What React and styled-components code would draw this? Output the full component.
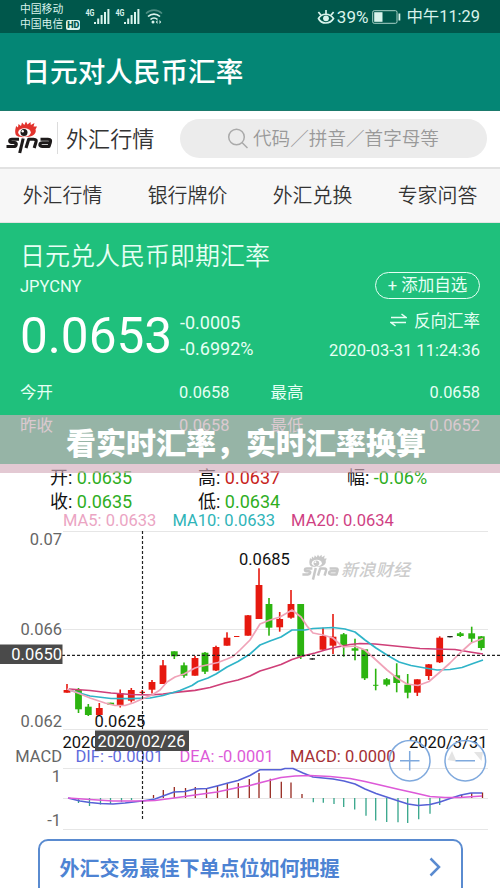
import React from "react";
import styled, { createGlobalStyle } from "styled-components";

const GlobalStyle = createGlobalStyle`
  * {
    box-sizing: border-box;
  }
  body {
    margin: 0;
    background-color: white;
    font-family: Roboto, "Noto Sans CJK SC", sans-serif;
  }
`;

const Page = styled.div`
  position: relative;
  width: 500px;
  height: 888px;
  overflow: hidden;
  background-color: white;
`;

const StatusBar = styled.div`
  height: 33px;
  padding: 1px 20px 0;
  display: flex;
  align-items: center;
  justify-content: space-between;
  background-color: #00574b;
  color: #d9f3ec;
`;

const StatusGroup = styled.div`
  display: flex;
  align-items: center;
`;

const Carriers = styled.div`
  width: 65px;
  font-size: 10.8px;
  line-height: 15.5px;
  white-space: nowrap;
`;

const Carrier = styled.div`
  display: flex;
  align-items: center;
`;

const HdBadge = styled.span`
  margin-left: 3px;
  padding: 0 1px;
  border-radius: 2px;
  background-color: #d9f3ec;
  color: #00574b;
  font-size: 9px;
  font-weight: 900;
  line-height: 10px;
`;

const BatteryLevel = styled.span`
  margin-left: 2px;
  font-size: 17px;
  line-height: 20px;
`;

const Clock = styled.span`
  margin-left: 5px;
  font-size: 16.4px;
  line-height: 20px;
  white-space: nowrap;
`;

const TitleBar = styled.div`
  height: 78px;
  padding: 2px 0 0 22.5px;
  display: flex;
  align-items: center;
  background-color: #048675;
  border-bottom: 1px solid #1b7a6c;
`;

const PageTitle = styled.h1`
  margin: 0;
  color: white;
  font-size: 27.6px;
  font-weight: 500;
  line-height: 40px;
`;

const SearchRow = styled.div`
  height: 56px;
  padding: 0 13px 2px 6px;
  display: flex;
  align-items: center;
`;

const Brand = styled.div`
  width: 174px;
  display: flex;
  align-items: center;
`;

const BrandName = styled.span`
  height: 32px;
  margin-left: 4px;
  padding-left: 8px;
  border-left: 1px solid #dcdcdc;
  color: #333;
  font-size: 22.1px;
  font-weight: 350;
  line-height: 34px;
`;

const SearchBox = styled.div`
  flex: 1;
  height: 39px;
  padding: 0 0 3px 47px;
  display: flex;
  align-items: center;
  gap: 4px;
  border-radius: 20px;
  background-color: #ececec;
  color: #999;
  font-size: 18.6px;
  font-weight: 350;
  white-space: nowrap;
`;

const SearchIcon = styled.svg`
  margin-top: 3px;
`;

const Nav = styled.div`
  height: 56px;
  display: flex;
  border-top: 2px solid #e2e2e2;
  border-bottom: 1px solid #e4e4e4;
  background-color: #f7f7f7;
`;

const NavItem = styled.div`
  flex: 1;
  text-align: center;
  color: #333;
  font-size: 19.9px;
  font-weight: 350;
  line-height: 56px;
`;

const QuotePanel = styled.div`
  height: 241px;
  padding: 14px 20px 0;
  background-color: #1fc07c;
  color: #e6fff4;
`;

const QuoteTop = styled.div`
  height: 139px;
  display: flex;
  justify-content: space-between;
`;

const PairName = styled.div`
  height: 37px;
  font-size: 25px;
  font-weight: 350;
  line-height: 39px;
  white-space: nowrap;
`;

const PairCode = styled.div`
  height: 24px;
  font-size: 16.5px;
  line-height: 25px;
`;

const PriceLine = styled.div`
  display: flex;
  align-items: center;
  height: 75px;
`;

const Price = styled.div`
  width: 160px;
  color: white;
  font-size: 49.5px;
  line-height: 60px;
`;

const Change = styled.div`
  font-size: 18px;
  line-height: 26px;
`;

const QuoteSide = styled.div`
  padding-top: 35px;
  display: flex;
  flex-direction: column;
  align-items: flex-end;
  font-size: 16.5px;
`;

const AddButton = styled.button`
  width: 105px;
  height: 27px;
  padding: 0;
  border: 1px solid #e6fff4;
  border-radius: 14px;
  background: none;
  color: inherit;
  font-family: inherit;
  font-size: 16.5px;
  line-height: 24px;
`;

const Reverse = styled.div`
  height: 41px;
  display: flex;
  align-items: center;
  gap: 7px;
`;

const Stamp = styled.div`
  line-height: 22px;
`;

const StatRow = styled.div`
  height: 33px;
  display: flex;
  gap: 41px;
`;

const Stat = styled.div`
  width: 209.5px;
  display: flex;
  justify-content: space-between;
  font-size: 16.4px;
  line-height: 33px;
`;

const InfoGrid = styled.div`
  height: 50px;
  padding: 1px 0 0 50px;
  display: grid;
  grid-template-columns: 148px 149px 1fr;
  grid-auto-rows: 24px;
  color: #111;
  font-size: 18px;
  line-height: 26px;
`;

const InfoValue = styled.span`
  color: ${(props) => props.$color};
`;

const MaRow = styled.div`
  height: 14px;
  padding-left: 63px;
  display: flex;
  gap: 16px;
  font-size: 16.5px;
  line-height: 14px;
  white-space: nowrap;
`;

const MaItem = styled.span`
  color: ${(props) => props.$color};
`;

const Chart = styled.svg`
  display: block;
  font-family: Roboto, "Noto Sans CJK SC", sans-serif;
`;

const PromoLink = styled.div`
  width: 425px;
  height: 60px;
  margin: 8px 0 0 37.5px;
  padding: 0 19px 4px 20px;
  display: flex;
  align-items: center;
  justify-content: space-between;
  border: 2px solid #5a8bd0;
  border-radius: 10px;
  color: #4d83d3;
  font-size: 20px;
  font-weight: 700;
`;

const Banner = styled.div`
  position: absolute;
  top: 415px;
  left: 0;
  width: 500px;
  height: 58px;
  background-color: rgba(213, 173, 188, 0.66);
  color: white;
  font-size: 30px;
  font-weight: 900;
  line-height: 58px;
  text-align: center;
  text-indent: -8px;
  white-space: nowrap;
`;

const RED = "#e6190f";
const GREEN = "#2cb410";
const BLACK = "#222";

// [x, body top, body bottom, wick top, wick bottom, color]
const candles = [
  [67, 690, 692.7, 684, 692.7, RED],
  [78.5, 690, 709.3, 688, 713, GREEN],
  [88.3, 706.7, 715, 704, 716, GREEN],
  [99.3, 708, 715, 703, 716, RED],
  [110.7, 702.7, 704.7, 702.7, 705, GREEN],
  [120.2, 693.3, 705.7, 689.5, 707.5, RED],
  [131.3, 690, 700.7, 688, 702.5, RED],
  [142.3, 691.8, 693, 690, 694, RED],
  [152, 682, 689.7, 680, 693.5, RED],
  [163, 665.3, 684, 660, 684, RED],
  [174.3, 651.3, 656.3, 651.3, 659, GREEN],
  [184, 665.3, 675.7, 662.5, 677.7, GREEN],
  [195, 658, 675.7, 656, 675.7, RED],
  [205, 652.7, 671.7, 652, 674, GREEN],
  [216, 647, 670.5, 645.7, 671, RED],
  [227, 637.7, 645.7, 632.3, 645.7, RED],
  [236.7, 636, 637, 636, 637, RED],
  [248, 615.3, 635.7, 615, 635.7, RED],
  [259, 585, 619, 568.3, 619, RED],
  [269, 604, 627.7, 598, 635.7, GREEN],
  [279.7, 619, 627.3, 612, 631.7, RED],
  [291, 604, 617.7, 590, 618.7, RED],
  [300.7, 604, 656.7, 604, 659, GREEN],
  [312.3, 658.3, 659.6, 658.3, 659.6, BLACK],
  [323, 636, 649.7, 627.7, 649.7, RED],
  [333, 636.7, 645.7, 614, 654, RED],
  [343.7, 634.3, 645, 633, 656.7, GREEN],
  [355, 648.3, 650.7, 638.7, 660.3, GREEN],
  [364.7, 649.3, 678.3, 649.3, 680, GREEN],
  [375.7, 684.8, 685.8, 668.7, 690.3, GREEN],
  [386.7, 679.3, 684.7, 678, 686.3, GREEN],
  [396.7, 675.3, 683, 663.3, 692.3, GREEN],
  [407.7, 684.7, 692.7, 674, 698.3, GREEN],
  [417.3, 679.3, 692.7, 679.3, 696, RED],
  [428.7, 664.3, 676, 664, 680, RED],
  [439.7, 637.7, 662.3, 636.3, 663, RED],
  [450, 636, 637.3, 636, 637.3, BLACK],
  [460.3, 633.3, 636, 632, 637, GREEN],
  [471.7, 633.3, 638.7, 626.7, 642, GREEN],
  [481.3, 636.3, 648, 636, 650.3, GREEN],
];

const ma5 =
  "67,689 78,693 90,698 105,703 115,705.5 125,705.5 133,703 142,699 152,695 160,690 167,682 175,677 184,674 195,668 200,666.5 218,662.5 227,659 233,656.5 240,650 250,640 260,624 270,620 280,617 292,610 301,617 307,626 313,633 323,635 333,638 343,647 355,646 365,650 376,660 387,670 397,678 407,684 418,685.5 429,681.5 440,672 450,663 460,653 471,643 483,638.5";

const ma10 =
  "69,690 90,696 111,698.5 131,698.7 150,698 163,695.5 180,690.5 192,685.5 198,681.5 208,678 216,674 227,667 238,661.5 250,654 260,645 270,641 281,637 292,630 305,630 313,628.5 333,627.5 345,629 355,632 365,640 376,648 387,655 399,662 411,665.5 425,668 437,670 450,669.5 462,667.5 473,663.5 483,660";

const ma20 =
  "69,689 90,690.5 111,693 131,694.5 150,695 163,694 180,691.8 195,690.3 210,687.5 225,683 238,680 250,676 260,671 270,668 281,664.5 292,659.5 303,656 315,653 325,650 337,647 350,644.5 360,643.5 375,644 390,645.5 405,647 420,648.5 435,649 455,649.5 470,652 483,654";

const dif =
  "68,798 80,801 90,802.5 100,803.5 113,804 125,803 142,801 155,799 163,796 174,792 185,791.5 195,789 207,788.5 217,786 228,783 238,780.5 250,775.5 260,769.7 281,769.7 285,768.5 293,768.5 303,773 313,777 333,779 344,781 355,784 365,789 376,793.5 388,797.5 397,800.5 408,804 418,805.5 430,804.5 440,802 450,798.5 461,795 471,793 482,793";

const dea =
  "68,798 90,799.5 113,801 142,801 155,800.5 174,798 195,795 217,792 238,787.5 250,785.5 265,781.5 281,777.5 295,776 310,775.5 330,776.5 350,778.5 365,781.5 380,785 397,789 415,793 430,796.5 445,797.5 460,797.5 482,796";

// [x, end of the bar]; the zero line is at 798
const macdBars = [
  [78.5, 803], [89.5, 806], [100.5, 804.5], [110.5, 804], [121.5, 802], [131.5, 800],
  [153.5, 795], [163.3, 790], [174.3, 787], [185.5, 788], [195.3, 787], [206.5, 788],
  [217.5, 786], [227.3, 783], [238.3, 783], [249.3, 779], [259, 773], [270.3, 778.7],
  [281.3, 781.7], [291, 782.5], [302, 794], [313.3, 802.3], [323.3, 802.7], [334, 804],
  [343.7, 807], [354.7, 809.5], [366, 815.7], [375.7, 820.5], [386.7, 822], [398, 822.3],
  [407.7, 823], [418.7, 819.3], [430, 813.7], [439.7, 805], [461.7, 795], [471.7, 793],
  [482.5, 792.5],
];

function SignalIcon() {
  return (
    <svg width="30" height="18" viewBox="0 0 30 18" fill="#d9f3ec">
      <text x="0.5" y="7.5" fontSize="8.5" fontWeight="700" textLength="9" lengthAdjust="spacingAndGlyphs">
        4G
      </text>
      <rect x="9" y="14" width="2" height="2" />
      <rect x="12.2" y="10.5" width="2" height="5.5" />
      <rect x="15.6" y="7" width="2" height="9" />
      <rect x="19" y="4" width="2" height="12" />
      <rect x="22.4" y="1" width="2" height="15" />
    </svg>
  );
}

function WifiIcon() {
  return (
    <svg width="18" height="18" viewBox="0 0 18 18" fill="none" stroke="#d9f3ec" strokeWidth="1.7">
      <path d="M1 5.5C5.5 1 12.5 1 17 5.5" opacity="0.35" />
      <path d="M3 8.5C6.5 5.2 11.5 5.2 15 8.5" />
      <path d="M5.5 11.5C7.5 9.6 10.5 9.6 12.5 11.5" />
      <circle cx="8" cy="14" r="1.5" fill="#d9f3ec" stroke="none" />
      <path d="M12.5 12L10.8 14L12.5 16ZM14.5 12L16.200 14L14.5 16Z" fill="#d9f3ec" stroke="none" />
    </svg>
  );
}

function EyeIcon() {
  return (
    <svg width="18" height="16" viewBox="0 0 18 16" fill="none" stroke="#d9f3ec" strokeWidth="1.7">
      <path d="M1.500 9.500C4.500 3.800 13 3.800 16.500 9.500C13 15.500 4.500 15.500 1.500 9.500Z" />
      <circle cx="9" cy="9.300" r="2.900" fill="#d9f3ec" stroke="none" />
      <path d="M9 5V1M4 6.200L1.400 3M14 6.200L16.600 3" />
    </svg>
  );
}

const BatterySvg = styled.svg`
  margin-left: 4px;
`;

function BatteryIcon() {
  return (
    <BatterySvg width="29" height="14" viewBox="0 0 29 14">
      <rect x="0.7" y="0.7" width="24.3" height="12.6" rx="1.5" fill="none" stroke="#a9d3c9" />
      <rect x="2.200" y="2.200" width="8.300" height="9.600" fill="#d9f3ec" />
      <rect x="26.500" y="3.500" width="1.800" height="7" fill="#d9f3ec" />
    </BatterySvg>
  );
}

// the eye with its flames over the wordmark
function SinaMark({ eye, ink }) {
  return (
    <>
      <path
        d="M9.500 13C8.500 9 10 7 10 5L12 6.500L12.500 3L15 5L16 1.500L18.300 4L20 0.500L21.500 3.500L24.500 1L24.800 4L28.500 2L27.500 5.500L31 5.500L29.500 8.500C31 12 27 16.500 19.500 16C14 16.500 10 15.500 9.500 13Z"
        fill={eye}
      />
      <ellipse cx="18.500" cy="11.500" rx="6.300" ry="4.200" fill="white" />
      <circle cx="18" cy="11.500" r="3.500" fill={ink} />
      <circle cx="16.700" cy="10.200" r="1.200" fill="white" />
      <g fill="none" stroke={ink} strokeWidth="3.1" strokeLinejoin="round">
        <path d="M13 18.200H6C3 18.200 3 21.500 5.500 21.500H8.500C11.500 21.500 10.500 25.500 7.500 25.500H0.500" />
        <path d="M17.200 17.500L13.700 32" />
        <path d="M20 27L22.700 18.200H27.500C30.500 18.200 30.500 19.500 30 21L28.200 27" />
        <path d="M34.500 18.200H42C45 18.200 44.800 19.500 44.300 21.500L43 25.500H36.500C32.500 25.500 33.500 21.700 36.500 21.700H43.500" />
      </g>
    </>
  );
}

function Header() {
  return (
    <>
      <StatusBar>
        <StatusGroup>
          <Carriers>
            <Carrier>中国移动</Carrier>
            <Carrier>
              中国电信<HdBadge>HD</HdBadge>
            </Carrier>
          </Carriers>
          <SignalIcon />
          <SignalIcon />
          <WifiIcon />
        </StatusGroup>
        <StatusGroup>
          <EyeIcon />
          <BatteryLevel>39%</BatteryLevel>
          <BatteryIcon />
          <Clock>中午11:29</Clock>
        </StatusGroup>
      </StatusBar>
      <TitleBar>
        <PageTitle>日元对人民币汇率</PageTitle>
      </TitleBar>
      <SearchRow>
        <Brand>
          <svg width="47" height="34" viewBox="0 0 47 34">
            <SinaMark eye="#e2332d" ink="#1d1a1a" />
          </svg>
          <BrandName>外汇行情</BrandName>
        </Brand>
        <SearchBox>
          <SearchIcon width="22" height="22" viewBox="0 0 22 22" fill="none" stroke="#aaa" strokeWidth="1.5">
            <circle cx="9.500" cy="10" r="7.800" />
            <path d="M15 15.500L20.500 21" />
          </SearchIcon>
          代码／拼音／首字母等
        </SearchBox>
      </SearchRow>
      <Nav>
        <NavItem>外汇行情</NavItem>
        <NavItem>银行牌价</NavItem>
        <NavItem>外汇兑换</NavItem>
        <NavItem>专家问答</NavItem>
      </Nav>
    </>
  );
}

function Quote() {
  return (
    <QuotePanel>
      <QuoteTop>
        <div>
          <PairName>日元兑人民币即期汇率</PairName>
          <PairCode>JPYCNY</PairCode>
          <PriceLine>
            <Price>0.0653</Price>
            <Change>
              -0.0005
              <br />
              -0.6992%
            </Change>
          </PriceLine>
        </div>
        <QuoteSide>
          <AddButton>+ 添加自选</AddButton>
          <Reverse>
            <svg width="17" height="14" viewBox="0 0 17 14" fill="none" stroke="#e6fff4" strokeWidth="1.5">
              <path d="M1 4.500H16L11.500 1M16 9.500H1L5.500 13" />
            </svg>
            反向汇率
          </Reverse>
          <Stamp>2020-03-31 11:24:36</Stamp>
        </QuoteSide>
      </QuoteTop>
      <StatRow>
        <Stat>
          <span>今开</span>
          <span>0.0658</span>
        </Stat>
        <Stat>
          <span>最高</span>
          <span>0.0658</span>
        </Stat>
      </StatRow>
      <StatRow>
        <Stat>
          <span>昨收</span>
          <span>0.0658</span>
        </Stat>
        <Stat>
          <span>最低</span>
          <span>0.0652</span>
        </Stat>
      </StatRow>
    </QuotePanel>
  );
}

function KLineChart() {
  return (
    <Chart width="500" height="303" viewBox="0 528 500 303" fontSize="16.5">
      <path
        d="M63 531.500H488M63 629.500H488M63 729.500H488M63 768.500H488M63 798.500H488M63 829.500H488"
        stroke="#e6e6e6"
      />

      <g transform="translate(302 554) scale(0.8)">
        <SinaMark eye="#c8c8c8" ink="#c8c8c8" />
      </g>
      <text x="341" y="576" fontSize="17" fontStyle="italic" fontWeight="500" fill="#cccccc" textLength="69">
        新浪财经
      </text>

      {candles.map(([x, top, bottom, high, low, color]) => (
        <g key={x} fill={color}>
          <rect x={x - 0.8} y={high} width="1.6" height={low - high} />
          <rect
            x={x - (bottom - top < 1.5 ? 2.7 : 3.4)}
            y={top}
            width={bottom - top < 1.5 ? 5.4 : 6.8}
            height={bottom - top}
          />
        </g>
      ))}
      <g fill="none" strokeWidth="1.7" strokeLinejoin="round">
        <polyline points={ma20} stroke="#cf3f78" />
        <polyline points={ma10} stroke="#2fb4c8" />
        <polyline points={ma5} stroke="#f0a3b8" />
      </g>

      {macdBars.map(([x, end]) => (
        <path key={x} d={`M${x} 798V${end}`} stroke={end < 798 ? "#96291f" : "#35a58a"} strokeWidth="1.3" />
      ))}
      <g fill="none" strokeWidth="1.6" strokeLinejoin="round">
        <polyline points={dif} stroke="#5661d6" />
        <polyline points={dea} stroke="#dd5ad8" />
      </g>

      <g fill="#666" textAnchor="end">
        <text x="62" y="545">0.07</text>
        <text x="62" y="635">0.066</text>
        <text x="62" y="727">0.062</text>
        <text x="62" y="762">MACD</text>
        <text x="61" y="782">1</text>
        <text x="61" y="826">-1</text>
      </g>
      <text x="75.500" y="762" fill="#5f6bdc">DIF: -0.0001</text>
      <text x="179.500" y="762" fill="#dd5ad8">DEA: -0.0001</text>
      <text x="290" y="762" fill="#a52f35">MACD: 0.0000</text>

      <g fill="#111">
        <text x="239" y="565">0.0685</text>
        <text x="94.500" y="727">0.0625</text>
        <text x="62.500" y="747.500">2020</text>
        <text x="487.500" y="747.500" textAnchor="end">2020/3/31</text>
      </g>

      <g stroke="#222" strokeWidth="1.2" strokeDasharray="3 2">
        <path d="M142.500 531V820" />
        <path d="M62 655.300H500" />
      </g>

      <rect x="0" y="644.500" width="62.500" height="19.500" fill="#4a4a4a" />
      <text x="62" y="660" fill="white" textAnchor="end">0.0650</text>
      <rect x="95" y="730.500" width="94" height="20.500" fill="#4a4a4a" />
      <text x="97.500" y="746.800" fill="white" textLength="88">2020/02/26</text>

      <path d="M447.500 760L452 751L456.500 761.500ZM474 752H483L481.500 761Z" fill="#e4e4e4" />
      <g fill="none" stroke="#7fa9dd" strokeWidth="1.5">
        <circle cx="409.700" cy="760.700" r="20.300" />
        <circle cx="465.300" cy="760.700" r="20.300" />
        <path d="M400 760.700H419.500M409.700 751V770.500M455.500 760.700H475" />
      </g>
    </Chart>
  );
}

export default function App() {
  return (
    <Page>
      <GlobalStyle />
      <Header />
      <Quote />
      <InfoGrid>
        <div>
          开: <InfoValue $color="#2fae1f">0.0635</InfoValue>
        </div>
        <div>
          高: <InfoValue $color="#c8241c">0.0637</InfoValue>
        </div>
        <div>
          幅: <InfoValue $color="#2fae1f">-0.06%</InfoValue>
        </div>
        <div>
          收: <InfoValue $color="#2fae1f">0.0635</InfoValue>
        </div>
        <div>
          低: <InfoValue $color="#2fae1f">0.0634</InfoValue>
        </div>
      </InfoGrid>
      <MaRow>
        <MaItem $color="#eba5c3">MA5: 0.0633</MaItem>
        <MaItem $color="#2fb4b8">MA10: 0.0633</MaItem>
        <MaItem $color="#cf3f83">MA20: 0.0634</MaItem>
      </MaRow>
      <KLineChart />
      <PromoLink>
        外汇交易最佳下单点位如何把握
        <svg width="14" height="20" viewBox="0 0 14 20" fill="none" stroke="#5a8bd0" strokeWidth="2.5">
          <path d="M2.500 1.500L11 10L2.500 18.500" />
        </svg>
      </PromoLink>
      <Banner>看实时汇率，实时汇率换算</Banner>
    </Page>
  );
}
